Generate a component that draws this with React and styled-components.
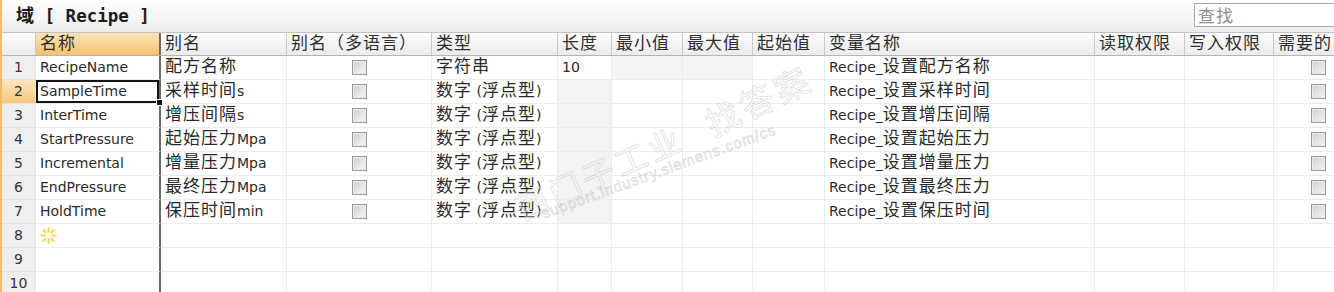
import React from 'react';
import styled, { createGlobalStyle } from 'styled-components';

const GlobalStyle = createGlobalStyle`
  html, body { margin: 0; padding: 0; background: #fff; }
  body { font-family: "DejaVu Sans", "Noto Sans CJK SC", sans-serif; }
  #root { width: 1334px; height: 292px; overflow: hidden; }
`;

const COLS = '34px 125px 126px 145px 126px 54px 71px 70px 72px 270px 90px 89px 90px';

const Window = styled.div`
  position: relative;
  width: 1334px;
  height: 292px;
  box-sizing: border-box;
  border-left: 2px solid #f0bd6e;
  background: #fff;
  overflow: hidden;
  display: flex;
  flex-direction: column;
`;

const TitleBar = styled.div`
  flex: none;
  height: 32px;
  box-sizing: border-box;
  padding-left: 14px;
  display: flex;
  align-items: center;
  justify-content: space-between;
  background: linear-gradient(#ffffff, #f5f5f5 55%, #ececec);
`;

const Title = styled.div`
  font-family: "DejaVu Sans Mono", "Noto Sans CJK SC", monospace;
  font-weight: bold;
  font-size: 17.5px;
  color: #1c1c1c;
  white-space: pre;
  line-height: 30px;
`;

const TitleHan = styled.span`
  font-family: "Noto Sans CJK SC", sans-serif;
  font-weight: bold;
  font-size: 18px;
  line-height: 1;
`;

const Search = styled.div`
  width: 152px;
  height: 24px;
  margin-right: -12px;
  margin-top: -2px;
  box-sizing: border-box;
  border: 1px solid #a9a9a9;
  background: #fff;
  padding-left: 3px;
  font-family: "Noto Sans CJK SC", sans-serif;
  font-size: 17px;
  letter-spacing: 1px;
  line-height: 21px;
  color: #8c8c8c;
`;

const Grid = styled.div`
  display: flex;
  flex-direction: column;
  width: 1332px;
`;

const HeaderRow = styled.div`
  flex: none;
  display: grid;
  grid-template-columns: ${COLS};
  height: 24px;
  box-sizing: border-box;
  border-top: 1px solid #c2c2c2;
  border-bottom: 1px solid #b4b4b4;
`;

const HeadCell = styled.div`
  box-sizing: border-box;
  padding-left: 4px;
  line-height: 22px;
  white-space: nowrap;
  font-size: 14px;
  color: #2e2e2e;
  background: ${p => (p.$active ? 'linear-gradient(#fde4b6, #f4c26f)' : 'linear-gradient(#fcfcfc, #ebebeb)')};
  border-right: ${p => (p.$strong ? '2px solid #6a6a6a' : '1px solid #c9c9c9')};
`;

const Row = styled.div`
  flex: none;
  display: grid;
  grid-template-columns: ${COLS};
  height: 24px;
`;

const RowNum = styled.div`
  box-sizing: border-box;
  text-align: center;
  line-height: 23px;
  font-size: 14px;
  color: #333;
  border-bottom: 1px solid #e2e2e2;
  border-right: 1px solid #e4e4e4;
  background: ${p => (p.$current ? 'linear-gradient(#fde7bf, #f6c97e)' : '#efefef')};
`;

const Cell = styled.div`
  position: relative;
  box-sizing: border-box;
  padding-left: ${p => (p.$center ? '0' : '4px')};
  text-align: ${p => (p.$center ? 'center' : 'left')};
  line-height: 23px;
  white-space: nowrap;
  font-size: 14px;
  color: #2a2a2a;
  background: ${p => (p.$shade ? '#f3f3f3' : '#fff')};
  border-bottom: 1px solid #ececec;
  border-right: ${p => (p.$strong ? '2px solid #6a6a6a' : '1px solid #ececec')};
  box-shadow: ${p => (p.$selected ? 'inset 0 0 0 2px #141414' : 'none')};
  z-index: ${p => (p.$selected ? 2 : 'auto')};
`;

const Handle = styled.span`
  position: absolute;
  right: -4px;
  bottom: -3px;
  width: 5px;
  height: 5px;
  background: #141414;
  border: 1px solid #fff;
`;

const Han = styled.span`
  font-family: "Noto Sans CJK SC", sans-serif;
  font-size: 17px;
  letter-spacing: 1px;
  line-height: 1;
`;

const Check = styled.span`
  display: inline-block;
  width: 15px;
  height: 15px;
  box-sizing: border-box;
  vertical-align: middle;
  margin-top: -2px;
  border: 1px solid #9a9a9a;
  background: linear-gradient(135deg, #cfcfcf, #f6f6f6);
  box-shadow: inset 0 0 0 1px #ebebeb;
`;

const Watermark = styled.div`
  position: absolute;
  inset: 0;
  pointer-events: none;
  z-index: 3;
`;

const MarkText = styled.div`
  position: absolute;
  left: ${p => p.$x}px;
  top: ${p => p.$y}px;
  transform: rotate(${p => p.$r}deg);
  transform-origin: left center;
  white-space: nowrap;
  font-family: ${p => (p.$latin ? '"Liberation Sans", sans-serif' : '"Noto Sans CJK SC", sans-serif')};
  font-size: ${p => p.$size}px;
  letter-spacing: ${p => (p.$latin ? '1px' : '4px')};
  color: rgba(255, 255, 255, 0.35);
  -webkit-text-stroke: 0.8px rgba(170, 170, 170, 0.4);
`;

const CJK = /([\u2E80-\u9FFF\uFF00-\uFFEF\u3000-\u303F]+)/;

const T = ({ children }) =>
  String(children)
    .split(CJK)
    .map((s, i) =>
      !s ? null : CJK.test(s) ? <Han key={i}>{s}</Han> : <React.Fragment key={i}>{s}</React.Fragment>
    );

const NewRowIcon = () => (
  <svg width="17" height="17" viewBox="0 0 17 17" style={{ verticalAlign: 'middle', marginTop: -2 }}>
    <g stroke="#f3cf3a" strokeWidth="1.6" strokeLinecap="round">
      <line x1="8.5" y1="1" x2="8.5" y2="5" />
      <line x1="8.5" y1="12" x2="8.5" y2="16" />
      <line x1="1" y1="8.5" x2="5" y2="8.5" />
      <line x1="12" y1="8.5" x2="16" y2="8.5" />
      <line x1="3" y1="3" x2="5.6" y2="5.6" />
      <line x1="11.4" y1="11.4" x2="14" y2="14" />
      <line x1="14" y1="3" x2="11.4" y2="5.6" />
      <line x1="5.6" y1="11.4" x2="3" y2="14" />
    </g>
    <g stroke="#f9e58a" strokeWidth="1" strokeLinecap="round">
      <line x1="5" y1="1.8" x2="6.2" y2="4.5" />
      <line x1="12" y1="1.8" x2="10.8" y2="4.5" />
      <line x1="5" y1="15.2" x2="6.2" y2="12.5" />
      <line x1="12" y1="15.2" x2="10.8" y2="12.5" />
    </g>
  </svg>
);

const headers = ['名称', '别名', '别名（多语言）', '类型', '长度', '最小值', '最大值', '起始值', '变量名称', '读取权限', '写入权限', '需要的'];

const rows = [
  ['RecipeName', '配方名称', '字符串', '10', 'Recipe_设置配方名称'],
  ['SampleTime', '采样时间s', '数字 (浮点型)', '', 'Recipe_设置采样时间'],
  ['InterTime', '增压间隔s', '数字 (浮点型)', '', 'Recipe_设置增压间隔'],
  ['StartPressure', '起始压力Mpa', '数字 (浮点型)', '', 'Recipe_设置起始压力'],
  ['Incremental', '增量压力Mpa', '数字 (浮点型)', '', 'Recipe_设置增量压力'],
  ['EndPressure', '最终压力Mpa', '数字 (浮点型)', '', 'Recipe_设置最终压力'],
  ['HoldTime', '保压时间min', '数字 (浮点型)', '', 'Recipe_设置保压时间'],
];

const DataRow = ({ index, data }) => {
  const [name, alias, type, len, varName] = data;
  const first = index === 1;
  const selected = index === 2;
  return (
    <Row>
      <RowNum $current={selected}>{index}</RowNum>
      <Cell $strong $selected={selected}>
        {name}
        {selected && <Handle />}
      </Cell>
      <Cell><T>{alias}</T></Cell>
      <Cell $center><Check /></Cell>
      <Cell><T>{type}</T></Cell>
      <Cell $shade={!first}>{len}</Cell>
      <Cell $shade={first} />
      <Cell $shade={first} />
      <Cell />
      <Cell><T>{varName}</T></Cell>
      <Cell />
      <Cell />
      <Cell $center><Check /></Cell>
    </Row>
  );
};

const EmptyRow = ({ index, children }) => (
  <Row>
    <RowNum>{index}</RowNum>
    <Cell $strong>{children}</Cell>
    {Array.from({ length: 11 }).map((_, i) => (
      <Cell key={i} />
    ))}
  </Row>
);

export default function App() {
  return (
    <>
      <GlobalStyle />
      <Window>
        <TitleBar>
          <Title>
            <TitleHan>域</TitleHan> [ Recipe ]
          </Title>
          <Search>查找</Search>
        </TitleBar>
        <Grid>
          <HeaderRow>
            <HeadCell />
            {headers.map((h, i) => (
              <HeadCell key={h} $active={i === 0} $strong={i === 0}>
                <T>{h}</T>
              </HeadCell>
            ))}
          </HeaderRow>
          {rows.map((r, i) => (
            <DataRow key={r[0]} index={i + 1} data={r} />
          ))}
          <EmptyRow index={8}>
            <NewRowIcon />
          </EmptyRow>
          <EmptyRow index={9} />
          <EmptyRow index={10} />
        </Grid>
        <Watermark>
          <MarkText $x={705} $y={100} $r={-26} $size={34}>找答案</MarkText>
          <MarkText $x={515} $y={185} $r={-24} $size={32}>西门子工业</MarkText>
          <MarkText $x={540} $y={205} $r={-20} $size={15} $latin>support.industry.siemens.com/cs</MarkText>
        </Watermark>
      </Window>
    </>
  );
}
